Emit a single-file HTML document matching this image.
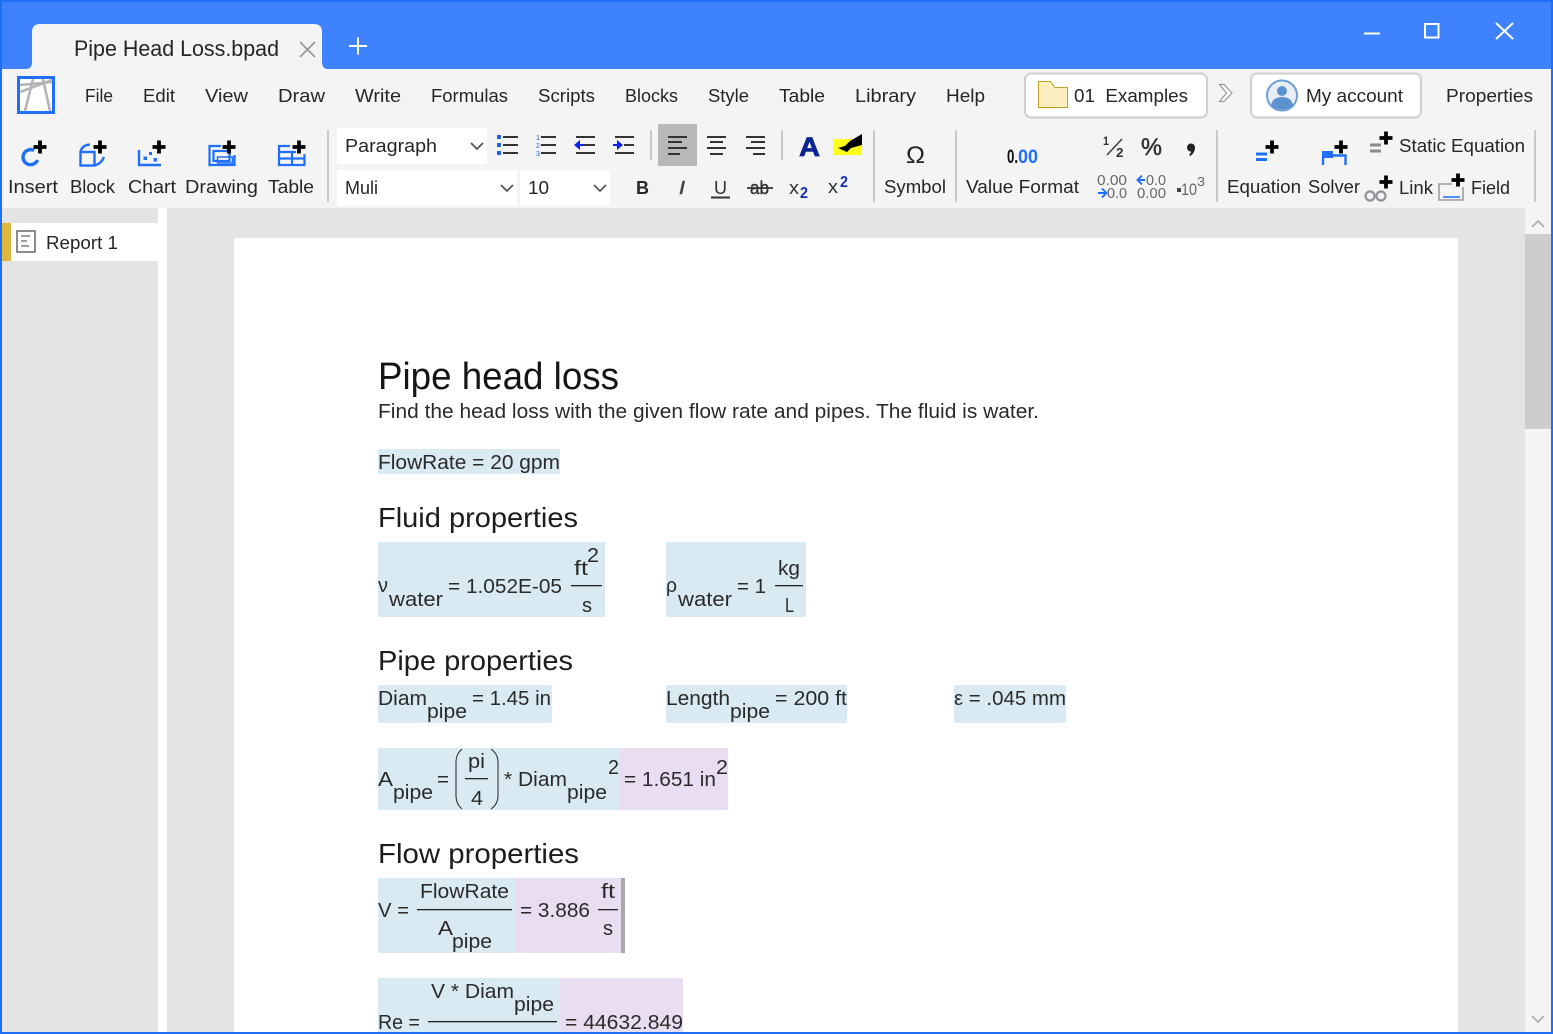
<!DOCTYPE html>
<html><head><meta charset="utf-8"><style>
html,body{margin:0;padding:0;width:1553px;height:1034px;overflow:hidden;background:#fff}
svg{display:block}
text{font-family:"Liberation Sans",sans-serif;fill:#262626;white-space:pre}
.m{font-size:18px}.b{font-size:20px;fill:#2a2a2a}
.h{font-size:28px;fill:#1c1c1c}
.i{stroke:#1f6ffb;fill:none;stroke-width:2.4}
</style></head><body>
<svg width="1553" height="1034" viewBox="0 0 1553 1034" xmlns="http://www.w3.org/2000/svg">
<defs><path id="p" d="M-6.500 0H6.500M0 -6.500V6.500" stroke="#000" stroke-width="3.800" fill="none"/></defs>
<rect width="1553" height="1034" fill="#1f6ff2"/>
<rect x="2" y="2" width="1549" height="67" fill="#3f82fd"/>
<rect x="2" y="69" width="1549" height="139" fill="#f4f4f4"/>
<rect x="2" y="208" width="1549" height="824" fill="#e4e4e4"/>
<rect x="158" y="208" width="9" height="824" fill="#fff"/>
<rect x="1525" y="208" width="26" height="824" fill="#f4f4f4"/>
<rect x="1525" y="234" width="26" height="195" fill="#cdcdcd"/>
<path d="M1532 227l6-6 6 6M1532 1016l6 6 6-6" stroke="#aaa" stroke-width="1.600" fill="none"/>
<rect x="234" y="238" width="1224" height="794" fill="#fff"/>
<!-- tab -->
<path d="M26 69C31 69 32 65 32 62V32Q32 24 40 24H314Q322 24 322 32V62C322 65 323 69 328 69Z" fill="#f4f4f4"/>
<text x="74" y="56" font-size="22" textLength="205" lengthAdjust="spacingAndGlyphs">Pipe Head Loss.bpad</text>
<path d="M300 42L315 57M315 42L300 57" stroke="#999" stroke-width="1.800"/>
<path d="M349 46H367M358 37.500V54.500" stroke="#fff" stroke-width="2"/>
<path d="M1364 33.500H1380" stroke="#fff" stroke-width="2"/>
<rect x="1425" y="24" width="13.500" height="13.500" fill="none" stroke="#fff" stroke-width="2"/>
<path d="M1496 23L1513 39M1513 23L1496 39" stroke="#fff" stroke-width="2"/>
<!-- logo -->
<rect x="18.500" y="77.500" width="35" height="35" fill="#fff" stroke="#1f6ffb" stroke-width="3"/>
<path d="M20 92L52 80M20 85L52 82M33 79L25 111M43 79L50 111" stroke="#b4b4b4" stroke-width="2.600" fill="none"/>
<!-- menu -->
<text class="m" x="85" y="102" textLength="28" lengthAdjust="spacingAndGlyphs">File</text>
<text class="m" x="143" y="102" textLength="32" lengthAdjust="spacingAndGlyphs">Edit</text>
<text class="m" x="205" y="102" textLength="43" lengthAdjust="spacingAndGlyphs">View</text>
<text class="m" x="278" y="102" textLength="47" lengthAdjust="spacingAndGlyphs">Draw</text>
<text class="m" x="355" y="102" textLength="46" lengthAdjust="spacingAndGlyphs">Write</text>
<text class="m" x="431" y="102" textLength="77" lengthAdjust="spacingAndGlyphs">Formulas</text>
<text class="m" x="538" y="102" textLength="57" lengthAdjust="spacingAndGlyphs">Scripts</text>
<text class="m" x="625" y="102" textLength="53" lengthAdjust="spacingAndGlyphs">Blocks</text>
<text class="m" x="708" y="102" textLength="41" lengthAdjust="spacingAndGlyphs">Style</text>
<text class="m" x="779" y="102" textLength="46" lengthAdjust="spacingAndGlyphs">Table</text>
<text class="m" x="855" y="102" textLength="61" lengthAdjust="spacingAndGlyphs">Library</text>
<text class="m" x="946" y="102" textLength="39" lengthAdjust="spacingAndGlyphs">Help</text>
<text class="m" x="1446" y="102" textLength="87" lengthAdjust="spacingAndGlyphs">Properties</text>
<!-- folder box -->
<rect x="1025" y="73.500" width="182" height="44" rx="6" fill="#fff" stroke="#cfcfcf" stroke-width="2"/>
<path d="M1038.500 107.500V81.500H1050.500L1055 87.500H1067.500V107.500Z" fill="#faeebe" stroke="#c4a02a" stroke-width="1"/>
<text class="m" x="1074" y="102" textLength="114" lengthAdjust="spacingAndGlyphs">01  Examples</text>
<path d="M1219.500 84.500H1224L1232 93L1224 101.500H1219.500L1226.500 93Z" fill="#fff" stroke="#999" stroke-width="1.200"/>
<rect x="1251" y="73.500" width="170" height="44" rx="6" fill="#fff" stroke="#cfcfcf" stroke-width="2"/>
<circle cx="1282" cy="95.500" r="15" fill="#e9eef6" stroke="#6d9fd6" stroke-width="2"/>
<circle cx="1282" cy="91" r="5" fill="#5c93cf"/><path d="M1271 106Q1272 97 1282 97Q1292 97 1293 106Q1282 113 1271 106Z" fill="#5c93cf"/>
<text class="m" x="1306" y="102" textLength="97" lengthAdjust="spacingAndGlyphs">My account</text>
<!-- separators -->
<g fill="#c8c8c8">
<rect x="327" y="130" width="2" height="72"/><rect x="650" y="130" width="2" height="30"/><rect x="781" y="130" width="2" height="30"/>
<rect x="873" y="130" width="2" height="72"/><rect x="955" y="130" width="2" height="72"/><rect x="1216" y="130" width="2" height="72"/><rect x="1534" y="130" width="2" height="72"/>
</g>
<!-- selects -->
<g fill="#fff"><rect x="337" y="128" width="150" height="36"/><rect x="337" y="170" width="180" height="36"/><rect x="520" y="170" width="90" height="36"/></g>
<text class="m" x="345" y="152" textLength="92" lengthAdjust="spacingAndGlyphs">Paragraph</text>
<text class="m" x="345" y="194" textLength="33" lengthAdjust="spacingAndGlyphs">Muli</text>
<text class="m" x="528" y="194" textLength="21" lengthAdjust="spacingAndGlyphs">10</text>
<path d="M471 143l6 6 6-6M501 185l6 6 6-6M594 185l6 6 6-6" stroke="#555" stroke-width="1.800" fill="none"/>
<!-- toolbar labels -->
<text class="m" x="8" y="193" textLength="50" lengthAdjust="spacingAndGlyphs">Insert</text>
<text class="m" x="70" y="193" textLength="45" lengthAdjust="spacingAndGlyphs">Block</text>
<text class="m" x="128" y="193" textLength="48" lengthAdjust="spacingAndGlyphs">Chart</text>
<text class="m" x="185" y="193" textLength="73" lengthAdjust="spacingAndGlyphs">Drawing</text>
<text class="m" x="268" y="193" textLength="46" lengthAdjust="spacingAndGlyphs">Table</text>
<text class="m" x="884" y="193" textLength="62" lengthAdjust="spacingAndGlyphs">Symbol</text>
<text class="m" x="966" y="193" textLength="113" lengthAdjust="spacingAndGlyphs">Value Format</text>
<text class="m" x="1227" y="193" textLength="74" lengthAdjust="spacingAndGlyphs">Equation</text>
<text class="m" x="1308" y="193" textLength="52" lengthAdjust="spacingAndGlyphs">Solver</text>
<text class="m" x="1399" y="152" textLength="126" lengthAdjust="spacingAndGlyphs">Static Equation</text>
<text class="m" x="1399" y="194" textLength="34" lengthAdjust="spacingAndGlyphs">Link</text>
<text class="m" x="1471" y="194" textLength="39" lengthAdjust="spacingAndGlyphs">Field</text>
<!-- insert icons -->
<path d="M34 150.500A7.500 7.500 0 1 0 37.500 160" fill="none" stroke="#1f6ffb" stroke-width="3.400"/><use href="#p" x="40" y="147"/>
<g class="i"><rect x="80.500" y="152" width="14" height="13.500"/><path d="M80.500 152Q82 145 90 144.500M94.500 165.500Q101 164 104 157"/></g><use href="#p" x="100" y="147"/>
<path d="M139 150V165H161" class="i"/><g fill="#1f6ffb"><rect x="143.500" y="156.500" width="3.500" height="3.500"/><rect x="149" y="152" width="3" height="3"/><rect x="153.500" y="158" width="3.500" height="3.500"/></g><use href="#p" x="159" y="147"/>
<g class="i" style="stroke-width:2.200"><path d="M221 146H209.500V165H234.500V155"/><rect x="213.500" y="151" width="16" height="10"/><rect x="217.500" y="157" width="15" height="6" style="stroke-width:1.500"/></g><use href="#p" x="229" y="147"/>
<g class="i" style="stroke-width:2.200"><path d="M290 146H279V165H304.500V154"/><path d="M279 152H296M279 158.500H304.500M292 152V165"/></g><use href="#p" x="299" y="147"/>
<!-- lists -->
<g stroke="#333" stroke-width="2"><path d="M503 137H518M503 145H518M503 153H518"/><path d="M541 137H556M541 145H556M541 153H556"/><path d="M576 137H595M584 145H595M576 153H595"/><path d="M615 137H634M615 153H634M624 145H634"/></g>
<g fill="#1f5ff0"><rect x="497" y="135" width="4" height="4"/><rect x="497" y="143" width="4" height="4"/><rect x="497" y="151" width="4" height="4"/></g>
<text x="536" y="140" style="fill:#1f5ff0;font-size:7px">1</text><text x="536" y="148" style="fill:#1f5ff0;font-size:7px">2</text><text x="536" y="156" style="fill:#1f5ff0;font-size:7px">3</text>
<path d="M574 145L580 140V150ZM580 144H584V146H580Z" fill="#0b22e8"/>
<path d="M613 144H617V146H613ZM617 140L623 145L617 150Z" fill="#0b22e8"/>
<rect x="658" y="124" width="39" height="42" fill="#b8b8b8"/>
<g stroke="#333" stroke-width="2"><path d="M668 137H687M668 142H682M668 148H687M668 154H680"/><path d="M707 137H726M710 142H723M707 148H726M710 154H723"/><path d="M746 137H765M751 142H765M746 148H765M753 154H765"/></g>
<text x="799" y="156" style="font-size:27px;font-weight:bold;fill:#0a2490;stroke:#0a2490;stroke-width:.7" textLength="21" lengthAdjust="spacingAndGlyphs">A</text>
<rect x="833" y="139" width="29" height="16" fill="#ffff18"/><path d="M838 148L845 146L850 141L862 134V145L851 148L847 152Z" fill="#000"/>
<text x="906" y="163" style="font-size:24px" textLength="19" lengthAdjust="spacingAndGlyphs">Ω</text>
<!-- format -->
<text x="636" y="194" style="font-size:18px;font-weight:bold" textLength="13" lengthAdjust="spacingAndGlyphs">B</text>
<text x="679" y="194" style="font-size:18px;font-style:italic;fill:#444;stroke:#444;stroke-width:.5" textLength="6" lengthAdjust="spacingAndGlyphs">I</text>
<text x="714" y="194" style="font-size:18px;fill:#333" textLength="13" lengthAdjust="spacingAndGlyphs">U</text><path d="M711 197.500H730" stroke="#333" stroke-width="2"/>
<text x="750" y="194" style="font-size:18px;fill:#333;stroke:#333;stroke-width:.4" textLength="19" lengthAdjust="spacingAndGlyphs">ab</text><path d="M747 188H773" stroke="#333" stroke-width="1.800"/>
<text x="789" y="194" style="font-size:18px;fill:#333" textLength="10" lengthAdjust="spacingAndGlyphs">x</text><text x="800" y="198" style="font-size:15.500px;font-weight:bold;fill:#1530b8" textLength="8" lengthAdjust="spacingAndGlyphs">2</text>
<text x="828" y="193" style="font-size:18px;fill:#333" textLength="10" lengthAdjust="spacingAndGlyphs">x</text><text x="840" y="187" style="font-size:15.500px;font-weight:bold;fill:#1530b8" textLength="8" lengthAdjust="spacingAndGlyphs">2</text>
<!-- value format -->
<text x="1007" y="163" style="font-size:19px;font-weight:bold;fill:#111" textLength="11" lengthAdjust="spacingAndGlyphs">0.</text><text x="1018" y="163" style="font-size:19px;font-weight:bold;fill:#1f6ffb" textLength="20" lengthAdjust="spacingAndGlyphs">00</text>
<text x="1103" y="145" style="font-size:12px;font-weight:bold;fill:#333" textLength="6" lengthAdjust="spacingAndGlyphs">1</text><path d="M1107 155L1122 139" stroke="#444" stroke-width="1.600"/><text x="1116" y="157" style="font-size:12.500px;font-weight:bold;fill:#333" textLength="7.500" lengthAdjust="spacingAndGlyphs">2</text>
<text x="1141" y="155" style="font-size:24px;fill:#333;stroke:#333;stroke-width:.5" textLength="21" lengthAdjust="spacingAndGlyphs">%</text>
<path d="M1187 147.500a4 4 0 1 1 8 0q0 5-4.500 8.500l-1.500-1.200q2-1.800 2-3.300a4 4 0 0 1-4-4z" fill="#222"/>
<text x="1097" y="185" style="font-size:14.500px;fill:#666" textLength="30" lengthAdjust="spacingAndGlyphs">0.00</text><text x="1107" y="198" style="font-size:14.500px;fill:#666" textLength="20" lengthAdjust="spacingAndGlyphs">0.0</text>
<text x="1146" y="185" style="font-size:14.500px;fill:#666" textLength="20" lengthAdjust="spacingAndGlyphs">0.0</text><text x="1137" y="198" style="font-size:14.500px;fill:#666" textLength="29" lengthAdjust="spacingAndGlyphs">0.00</text>
<text x="1181" y="195" style="font-size:17px;fill:#666" textLength="16" lengthAdjust="spacingAndGlyphs">10</text><text x="1197" y="186" style="font-size:13px;fill:#666" textLength="8" lengthAdjust="spacingAndGlyphs">3</text>
<rect x="1177" y="188" width="4" height="4" fill="#444"/>
<path d="M1098 193H1106M1102 188.500L1106.500 193L1102 197.500M1145 180H1137.500M1142 175.500L1137.500 180L1142 184.500" stroke="#1f6ffb" stroke-width="1.900" fill="none"/>
<!-- equation etc -->
<path d="M1256 154H1267M1256 159.500H1267" stroke="#1f6ffb" stroke-width="3"/><use href="#p" x="1272" y="147"/>
<path d="M1323 165V157M1332 155.500H1345.500V165" fill="none" stroke="#1f6ffb" stroke-width="2.400"/><path d="M1322 151H1333V158H1322Z" fill="#1f6ffb"/><use href="#p" x="1341" y="147"/>
<path d="M1370 145H1381M1370 151H1381" stroke="#8a8a8a" stroke-width="3"/><use href="#p" x="1386" y="138"/>
<g fill="none" stroke="#8f9399" stroke-width="2.200"><circle cx="1370" cy="196" r="4.500"/><circle cx="1381" cy="196" r="4.500"/></g><use href="#p" x="1386" y="182"/>
<path d="M1452 184H1439V200H1463V187" fill="#f4f4f4" stroke="#999" stroke-width="1.500"/><path d="M1443 197H1460" stroke="#1f6ffb" stroke-width="1.500"/><use href="#p" x="1458" y="180"/>
<!-- sidebar -->
<rect x="2" y="223" width="156" height="38" fill="#fff"/><rect x="2" y="223" width="9" height="38" fill="#deb83e"/>
<rect x="17" y="231" width="18" height="21" fill="#fff" stroke="#666" stroke-width="1.500"/><path d="M21 236H30M21 241H27M21 246H29" stroke="#666" stroke-width="1.300"/>
<text class="m" x="46" y="249" textLength="72" lengthAdjust="spacingAndGlyphs">Report 1</text>
<!-- blocks -->
<g fill="#d9eaf2">
<rect x="378" y="449" width="182" height="25"/><rect x="378" y="542" width="227" height="75"/><rect x="666" y="542" width="140" height="75"/>
<rect x="378" y="685" width="174" height="38"/><rect x="666" y="685" width="181" height="38"/><rect x="954" y="685" width="112" height="38"/>
<rect x="378" y="748" width="241" height="62"/><rect x="378" y="878" width="137" height="75"/><rect x="378" y="978" width="182" height="54"/>
</g>
<g fill="#e9def1"><rect x="619" y="748" width="109" height="62"/><rect x="515" y="878" width="106" height="75"/><rect x="560" y="978" width="123" height="54"/></g>
<rect x="621" y="878" width="4" height="75" fill="#a8a8a8"/>
<!-- doc text -->
<text x="378" y="389" style="font-size:38px;fill:#151515" textLength="241" lengthAdjust="spacingAndGlyphs">Pipe head loss</text>
<text class="b" x="378" y="418" textLength="661" lengthAdjust="spacingAndGlyphs">Find the head loss with the given flow rate and pipes. The fluid is water.</text>
<text class="b" x="378" y="469" textLength="182" lengthAdjust="spacingAndGlyphs">FlowRate = 20 gpm</text>
<text class="h" x="378" y="527" textLength="200" lengthAdjust="spacingAndGlyphs">Fluid properties</text>
<text class="b" x="378" y="592" textLength="10" lengthAdjust="spacingAndGlyphs">ν</text>
<text class="b" x="389" y="606" textLength="54" lengthAdjust="spacingAndGlyphs">water</text>
<text class="b" x="448" y="593" textLength="114" lengthAdjust="spacingAndGlyphs">= 1.052E-05</text>
<text class="b" x="574" y="575" textLength="14" lengthAdjust="spacingAndGlyphs">ft</text>
<text class="b" x="587" y="562" textLength="12" lengthAdjust="spacingAndGlyphs">2</text>
<rect x="571" y="585" width="31" height="1.300" fill="#222"/>
<text class="b" x="582" y="612" textLength="10" lengthAdjust="spacingAndGlyphs">s</text>
<text class="b" x="666" y="592" textLength="11" lengthAdjust="spacingAndGlyphs">ρ</text>
<text class="b" x="678" y="606" textLength="54" lengthAdjust="spacingAndGlyphs">water</text>
<text class="b" x="737" y="593" textLength="29" lengthAdjust="spacingAndGlyphs">= 1</text>
<text class="b" x="778" y="575" textLength="22" lengthAdjust="spacingAndGlyphs">kg</text>
<rect x="775" y="585" width="28" height="1.300" fill="#222"/>
<text class="b" x="785" y="612" textLength="9" lengthAdjust="spacingAndGlyphs">L</text>
<text class="h" x="378" y="670" textLength="195" lengthAdjust="spacingAndGlyphs">Pipe properties</text>
<text class="b" x="378" y="705" textLength="49" lengthAdjust="spacingAndGlyphs">Diam</text>
<text class="b" x="427" y="718" textLength="40" lengthAdjust="spacingAndGlyphs">pipe</text>
<text class="b" x="472" y="705" textLength="79" lengthAdjust="spacingAndGlyphs">= 1.45 in</text>
<text class="b" x="666" y="705" textLength="64" lengthAdjust="spacingAndGlyphs">Length</text>
<text class="b" x="730" y="718" textLength="40" lengthAdjust="spacingAndGlyphs">pipe</text>
<text class="b" x="775" y="705" textLength="72" lengthAdjust="spacingAndGlyphs">= 200 ft</text>
<text class="b" x="954" y="705" textLength="112" lengthAdjust="spacingAndGlyphs">ε = .045 mm</text>
<text class="b" x="378" y="786" textLength="15" lengthAdjust="spacingAndGlyphs">A</text>
<text class="b" x="393" y="799" textLength="40" lengthAdjust="spacingAndGlyphs">pipe</text>
<text class="b" x="437" y="786" textLength="12" lengthAdjust="spacingAndGlyphs">=</text>
<path d="M462 749Q456 754 456 762V796Q456 804 462 809M491 749Q498 754 498 762V796Q498 804 491 809" fill="none" stroke="#222" stroke-width="1"/>
<text class="b" x="468" y="768" textLength="17" lengthAdjust="spacingAndGlyphs">pi</text>
<rect x="465" y="778" width="23" height="1.300" fill="#222"/>
<text class="b" x="471" y="805" textLength="12" lengthAdjust="spacingAndGlyphs">4</text>
<text class="b" x="504" y="786" textLength="63" lengthAdjust="spacingAndGlyphs">* Diam</text>
<text class="b" x="567" y="799" textLength="40" lengthAdjust="spacingAndGlyphs">pipe</text>
<text class="b" x="608" y="774" textLength="11" lengthAdjust="spacingAndGlyphs">2</text>
<text class="b" x="624" y="786" textLength="92" lengthAdjust="spacingAndGlyphs">= 1.651 in</text>
<text class="b" x="716" y="774" textLength="12" lengthAdjust="spacingAndGlyphs">2</text>
<text class="h" x="378" y="863" textLength="201" lengthAdjust="spacingAndGlyphs">Flow properties</text>
<text class="b" x="378" y="917" textLength="31" lengthAdjust="spacingAndGlyphs">V =</text>
<text class="b" x="420" y="898" textLength="89" lengthAdjust="spacingAndGlyphs">FlowRate</text>
<rect x="417" y="909" width="95" height="1.300" fill="#222"/>
<text class="b" x="438" y="935" textLength="15" lengthAdjust="spacingAndGlyphs">A</text>
<text class="b" x="452" y="948" textLength="40" lengthAdjust="spacingAndGlyphs">pipe</text>
<text class="b" x="520" y="917" textLength="70" lengthAdjust="spacingAndGlyphs">= 3.886</text>
<text class="b" x="601" y="898" textLength="14" lengthAdjust="spacingAndGlyphs">ft</text>
<rect x="598" y="909" width="20" height="1.300" fill="#222"/>
<text class="b" x="603" y="935" textLength="10" lengthAdjust="spacingAndGlyphs">s</text>
<text class="b" x="431" y="998" textLength="83" lengthAdjust="spacingAndGlyphs">V * Diam</text>
<text class="b" x="514" y="1011" textLength="40" lengthAdjust="spacingAndGlyphs">pipe</text>
<text class="b" x="378" y="1029" textLength="42" lengthAdjust="spacingAndGlyphs">Re =</text>
<rect x="428" y="1021" width="129" height="1.300" fill="#222"/>
<text class="b" x="565" y="1029" textLength="118" lengthAdjust="spacingAndGlyphs">= 44632.849</text>
<rect x="0" y="1032" width="1553" height="2" fill="#1f6ff2"/>
</svg>
</body></html>
